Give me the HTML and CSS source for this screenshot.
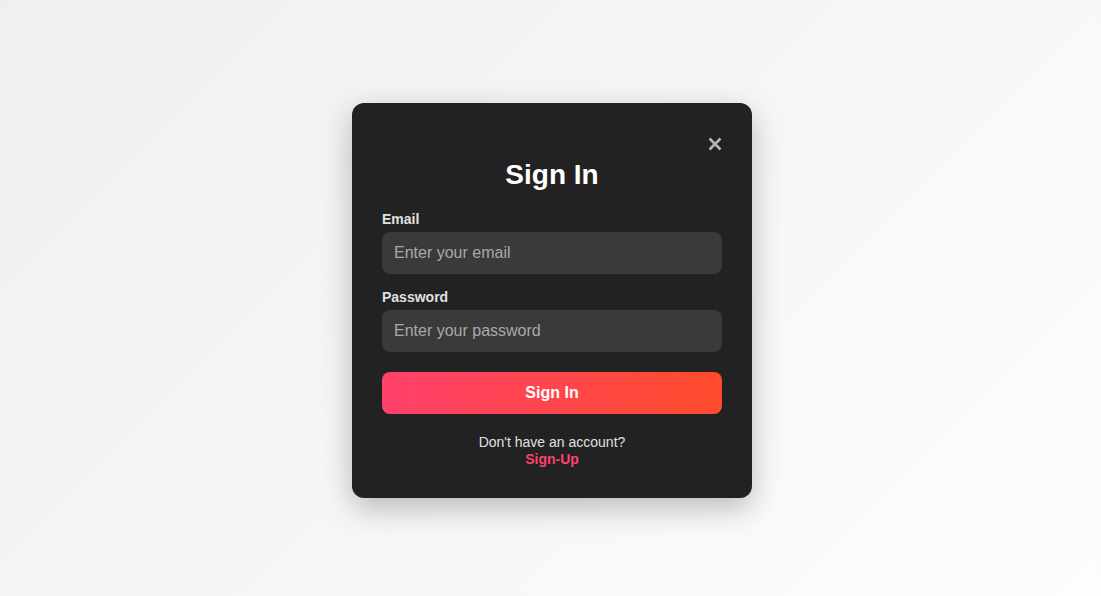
FILE: index.html
```html
<!DOCTYPE html>
<html lang="en">
<head>
<meta charset="utf-8">
<title>Sign In</title>
<link rel="stylesheet" href="styles.css">
</head>
<body>
  <div class="modal">
    <div class="close-row">
      <button class="close" aria-label="Close">
        <svg width="14" height="14" viewBox="0 0 14 14"><path d="M1.5 1.5 L12.5 12.5 M12.5 1.5 L1.5 12.5" stroke="#b4b4bc" stroke-width="2.6" stroke-linecap="butt" fill="none"/></svg>
      </button>
    </div>
    <h2 class="title">Sign In</h2>
    <form class="form">
      <div class="group">
        <label class="label" for="email">Email</label>
        <input class="input" id="email" type="email" placeholder="Enter your email">
      </div>
      <div class="group">
        <label class="label" for="password">Password</label>
        <input class="input" id="password" type="password" placeholder="Enter your password">
      </div>
      <button class="submit" type="button">Sign In</button>
    </form>
    <div class="footer">
      <div class="footer-text">Don't have an account?</div>
      <a class="signup" href="#">Sign-Up</a>
    </div>
  </div>
</body>
</html>
```
FILE: styles.css
```css
* { box-sizing: border-box; }
html, body { margin: 0; height: 100%; }
body {
  font-family: "Liberation Sans", Arial, sans-serif;
  background: linear-gradient(135deg, #efefef 0%, #fdfdfd 100%);
  display: flex;
  align-items: center;
  justify-content: center;
  padding: 5px 0 0 3px;
}
.modal {
  width: 400px;
  background: #222222;
  border-radius: 12px;
  padding: 30px;
  box-shadow: 0 10px 30px rgba(0, 0, 0, 0.25);
  display: flex;
  flex-direction: column;
}
.close-row {
  display: flex;
  justify-content: flex-end;
  height: 24px;
}
.close {
  background: none;
  border: 0;
  padding: 0;
  width: 14px;
  height: 24px;
  display: flex;
  align-items: center;
  justify-content: center;
  cursor: pointer;
  margin-top: -1px;
}
.title {
  margin: 2px 0 20px;
  text-align: center;
  color: #ffffff;
  font-size: 28px;
  font-weight: bold;
  line-height: 32px;
}
.form { display: flex; flex-direction: column; }
.group { display: flex; flex-direction: column; margin-bottom: 15px; }
.label {
  color: #e0e0e0;
  font-size: 14px;
  font-weight: bold;
  line-height: 16px;
  margin-bottom: 5px;
}
.input {
  height: 42px;
  background: #3a3a3a;
  border: 0;
  border-radius: 8px;
  padding: 0 12px;
  font-family: inherit;
  font-size: 16px;
  color: #fff;
  outline: none;
}
.input::placeholder { color: #a9a9a9; }
.submit {
  margin-top: 5px;
  height: 42px;
  border: 0;
  border-radius: 8px;
  background: linear-gradient(100deg, #ff416c 0%, #ff4b2b 100%);
  color: #fff;
  font-family: inherit;
  font-size: 16px;
  font-weight: bold;
}
.footer {
  margin-top: 20px;
  text-align: center;
  font-size: 14px;
  line-height: 17px;
}
.footer-text { color: #e0e0e0; }
.signup {
  color: #ff416c;
  font-weight: bold;
  text-decoration: none;
}
```
